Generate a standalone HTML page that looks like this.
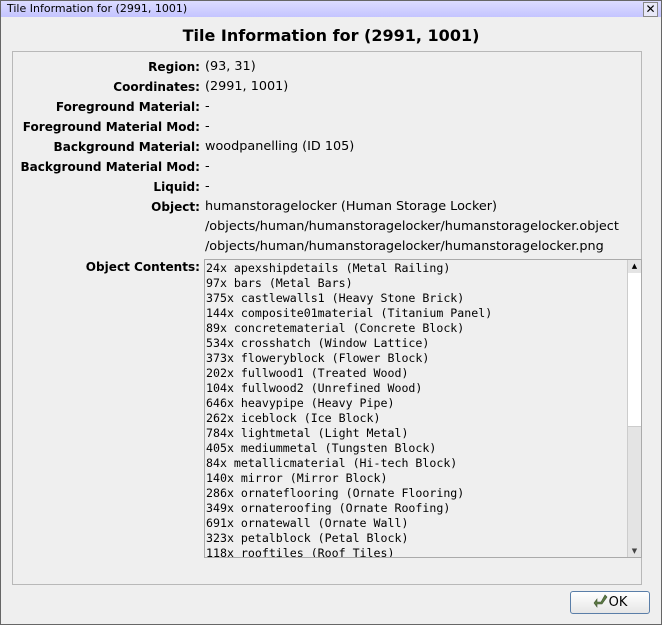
<!DOCTYPE html>
<html><head><style>
body{margin:0;width:662px;height:625px;background:#efefef;position:relative;overflow:hidden;font-family:"DejaVu Sans","Liberation Sans",sans-serif;}
.win{position:absolute;left:0;top:0;width:660px;height:623px;border:1px solid #666;background:#efefef;}
.tb{position:absolute;left:0;top:0;width:660px;height:16px;background:linear-gradient(#dcdcff,#c4c4ff);font-size:11px;line-height:16px;color:#000;padding-left:6px;box-sizing:border-box;}
.x{position:absolute;right:3px;top:1px;width:13px;height:13px;border:1px solid #888;background:#e8e8f8;font-size:12px;line-height:12px;text-align:center;}
h1{position:absolute;left:0;width:662px;top:26px;margin:0;text-align:center;font-size:16px;font-weight:bold;}
.frame{position:absolute;left:12px;top:51px;width:628px;height:532px;border:1px solid #b8b8b8;}
.row{position:absolute;line-height:20px;white-space:nowrap;}
.l{position:absolute;right:462px;font-weight:bold;font-size:12.05px;}
.v{position:absolute;left:205px;font-size:12.8px;}
.list{position:absolute;left:204px;top:259px;width:436px;height:297px;border:1px solid #aaa;background:#efefef;overflow:hidden;}
.list pre{margin:0;padding:1px 0 0 1px;font-family:"DejaVu Sans Mono","Liberation Mono",monospace;font-size:11.6px;line-height:15px;}
.sb{position:absolute;right:0;top:0;width:13px;height:297px;border-left:1px solid #ccc;background:#e4e4e4;}
.th{position:absolute;left:0;top:13px;width:13px;height:153px;background:#fff;border-bottom:1px solid #ccc;}
.btn{position:absolute;left:570px;top:591px;width:78px;height:21px;border:1px solid #5a7ea8;border-radius:3px;background:linear-gradient(#fff,#e6e6e6);font-size:13px;line-height:21px;text-align:center;}
</style></head><body>
<div class="win">
<div class="tb">Tile Information for (2991, 1001)<div class="x">✕</div></div>
</div>
<h1>Tile Information for (2991, 1001)</h1>
<div class="frame"></div>
<div class="row" style="top:57px;width:662px"><span class="l">Region:</span><span class="v">(93, 31)</span></div>
<div class="row" style="top:77px;width:662px"><span class="l">Coordinates:</span><span class="v">(2991, 1001)</span></div>
<div class="row" style="top:97px;width:662px"><span class="l">Foreground Material:</span><span class="v">-</span></div>
<div class="row" style="top:117px;width:662px"><span class="l">Foreground Material Mod:</span><span class="v">-</span></div>
<div class="row" style="top:137px;width:662px"><span class="l">Background Material:</span><span class="v">woodpanelling (ID 105)</span></div>
<div class="row" style="top:157px;width:662px"><span class="l">Background Material Mod:</span><span class="v">-</span></div>
<div class="row" style="top:177px;width:662px"><span class="l">Liquid:</span><span class="v">-</span></div>
<div class="row" style="top:197px;width:662px"><span class="l">Object:</span><span class="v">humanstoragelocker (Human Storage Locker)</span></div>
<div class="row" style="top:217px;width:662px"><span class="v">/objects/human/humanstoragelocker/humanstoragelocker.object</span></div>
<div class="row" style="top:237px;width:662px"><span class="v">/objects/human/humanstoragelocker/humanstoragelocker.png</span></div>
<div class="row" style="top:257px;width:662px"><span class="l">Object Contents:</span></div>
<div class="list"><pre>24x apexshipdetails (Metal Railing)
97x bars (Metal Bars)
375x castlewalls1 (Heavy Stone Brick)
144x composite01material (Titanium Panel)
89x concretematerial (Concrete Block)
534x crosshatch (Window Lattice)
373x floweryblock (Flower Block)
202x fullwood1 (Treated Wood)
104x fullwood2 (Unrefined Wood)
646x heavypipe (Heavy Pipe)
262x iceblock (Ice Block)
784x lightmetal (Light Metal)
405x mediummetal (Tungsten Block)
84x metallicmaterial (Hi-tech Block)
140x mirror (Mirror Block)
286x ornateflooring (Ornate Flooring)
349x ornateroofing (Ornate Roofing)
691x ornatewall (Ornate Wall)
323x petalblock (Petal Block)
118x rooftiles (Roof Tiles)</pre>
<div class="sb"><div style="position:absolute;top:2px;left:0;width:13px;text-align:center;font-size:7px;line-height:8px">▲</div><div class="th"></div><div style="position:absolute;bottom:2px;left:0;width:13px;text-align:center;font-size:7px;line-height:8px;color:#444">▼</div></div>
</div>
<div class="btn"><svg width="16" height="14" viewBox="0 0 16 14" style="vertical-align:-2px"><path d="M12 1 L14 3 L9 10 L4 10 L4 13 L1 9 L4 5 L4 8 L8 8 Z" fill="#5d7a45" stroke="#3f5530" stroke-width="0.6"/></svg>OK</div>
</body></html>
